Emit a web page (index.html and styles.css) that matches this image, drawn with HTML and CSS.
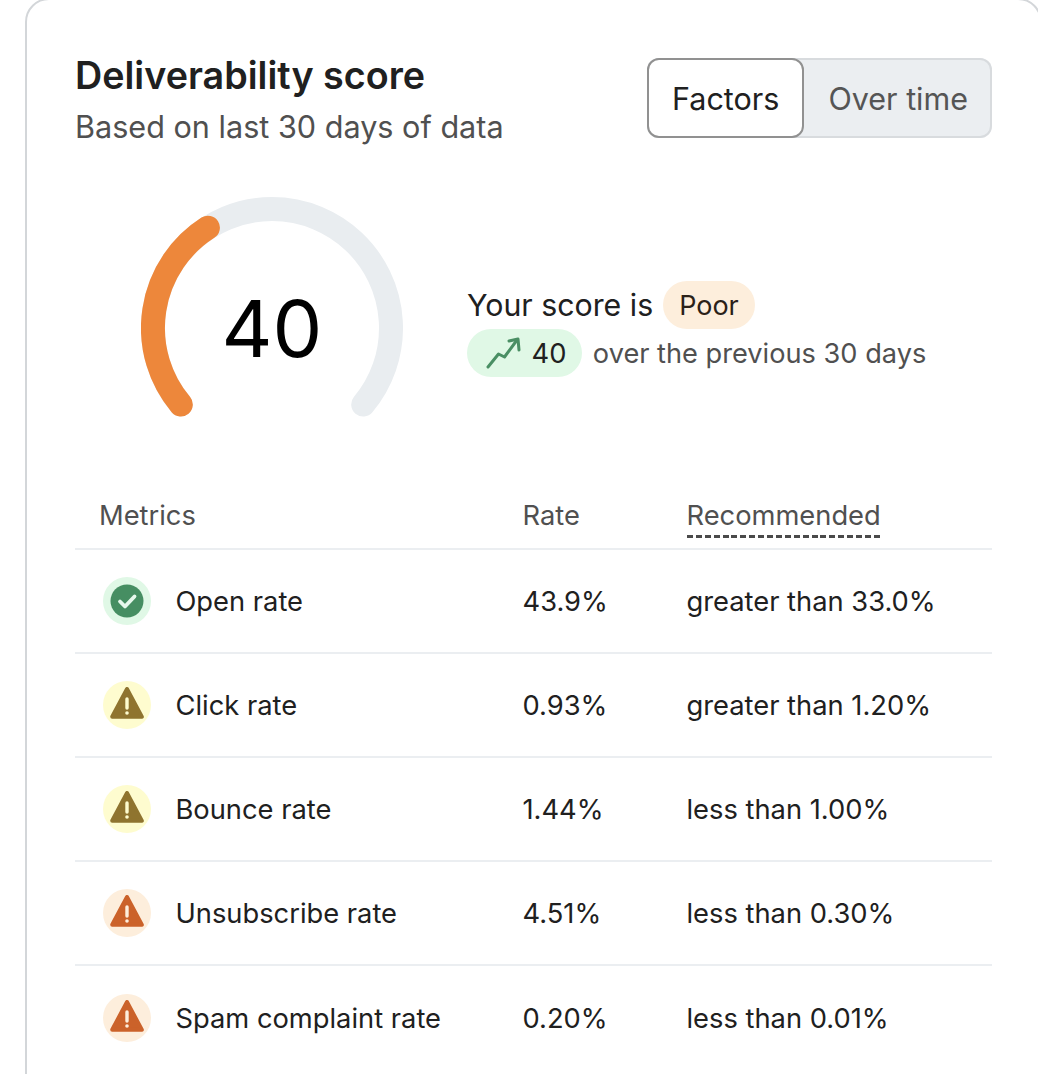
FILE: index.html
```html
<!DOCTYPE html>
<html lang="en">
<head>
<meta charset="utf-8">
<title>Deliverability score</title>
<link rel="stylesheet" href="styles.css">
</head>
<body>
<section class="card">
  <header class="head">
    <div>
      <h1 class="title">Deliverability score</h1>
      <p class="sub">Based on last 30 days of data</p>
    </div>
    <div class="toggle">
      <span class="seg seg-on">Factors</span>
      <span class="seg">Over time</span>
    </div>
  </header>

  <div class="summary">
    <div class="gauge">
      <svg class="gauge-svg" width="262" height="222" viewBox="0 0 262 222" fill="none" stroke-width="24" stroke-linecap="round">
        <path d="M39.8 207.5A119 119 0 1 1 222.2 207.5" stroke="#e9edf0"/>
        <path d="M39.8 207.5A119 119 0 0 1 66.9 30.7" stroke="#ed873b"/>
      </svg>
      <span class="gauge-num">40</span>
    </div>
    <div class="score">
      <div class="score-line"><span>Your score is</span><span class="pill pill-poor">Poor</span></div>
      <div class="delta-line">
        <span class="pill pill-delta">
          <svg width="36" height="36" viewBox="0 0 36 36" fill="none" stroke="#4a8f64" stroke-width="3" stroke-linecap="round" stroke-linejoin="round"><path d="M3 32 13.500 19l6 3L32 5"/><path d="M24 6 33 4l1 11"/></svg>
          40
        </span>
        <span class="delta-text">over the previous 30 days</span>
      </div>
    </div>
  </div>

  <div class="table">
    <div class="row row-head">
      <span class="th-metric">Metrics</span>
      <span>Rate</span>
      <span><span class="dashed">Recommended</span></span>
    </div>
    <div class="row">
      <span class="metric"><span class="badge badge-good"><svg width="34" height="34" viewBox="0 0 34 34"><circle cx="17" cy="17" r="16.500" fill="#468e62"/><path d="M10 17.500 15 22.500 24.500 12.500" fill="none" stroke="#e6f8ec" stroke-width="3.800" stroke-linecap="round" stroke-linejoin="round"/></svg></span>Open rate</span>
      <span>43.9%</span>
      <span>greater than 33.0%</span>
    </div>
    <div class="row">
      <span class="metric"><span class="badge badge-warn"><svg width="36" height="36" viewBox="0 0 36 36"><path d="M18 2 32.800 29.700H3.200Z" fill="#8f742f" stroke="#8f742f" stroke-width="4" stroke-linejoin="round"/><path d="M18 12v9" stroke="#fefccf" stroke-width="3.400" stroke-linecap="round"/><circle cx="18" cy="26" r="1.800" fill="#fefccf"/></svg></span>Click rate</span>
      <span>0.93%</span>
      <span>greater than 1.20%</span>
    </div>
    <div class="row">
      <span class="metric"><span class="badge badge-warn"><svg width="36" height="36" viewBox="0 0 36 36"><path d="M18 2 32.800 29.700H3.200Z" fill="#8f742f" stroke="#8f742f" stroke-width="4" stroke-linejoin="round"/><path d="M18 12v9" stroke="#fefccf" stroke-width="3.400" stroke-linecap="round"/><circle cx="18" cy="26" r="1.800" fill="#fefccf"/></svg></span>Bounce rate</span>
      <span>1.44%</span>
      <span>less than 1.00%</span>
    </div>
    <div class="row">
      <span class="metric"><span class="badge badge-bad"><svg width="36" height="36" viewBox="0 0 36 36"><path d="M18 2 32.800 29.700H3.200Z" fill="#cb622a" stroke="#cb622a" stroke-width="4" stroke-linejoin="round"/><path d="M18 12v9" stroke="#fdeedc" stroke-width="3.400" stroke-linecap="round"/><circle cx="18" cy="26" r="1.800" fill="#fdeedc"/></svg></span>Unsubscribe rate</span>
      <span>4.51%</span>
      <span>less than 0.30%</span>
    </div>
    <div class="row">
      <span class="metric"><span class="badge badge-bad"><svg width="36" height="36" viewBox="0 0 36 36"><path d="M18 2 32.800 29.700H3.200Z" fill="#cb622a" stroke="#cb622a" stroke-width="4" stroke-linejoin="round"/><path d="M18 12v9" stroke="#fdeedc" stroke-width="3.400" stroke-linecap="round"/><circle cx="18" cy="26" r="1.800" fill="#fdeedc"/></svg></span>Spam complaint rate</span>
      <span>0.20%</span>
      <span>less than 0.01%</span>
    </div>
  </div>
</section>
</body>
</html>
```
FILE: styles.css
```css
* { box-sizing: border-box; }
html, body { margin: 0; height: 100%; overflow: hidden; background: #fff; }
body { font-family: Inter, "Noto Sans", sans-serif; color: #202020; }

.card {
  width: 1017px;
  height: 1200px;
  margin: -2px 0 0 25px;
  padding: 51px 48px 0;
  border: 2px solid #d3d6d9;
  border-radius: 24px;
  background: #fff;
}

.head { display: flex; justify-content: space-between; align-items: flex-start; }
.title { margin: 0; font-size: 37.700px; line-height: 48px; font-weight: 600; color: #202020; }
.sub { margin: 6px 0 0; font-size: 30.600px; line-height: 44px; color: #505050; }

.toggle {
  display: flex;
  height: 80px;
  margin-top: 7px;
  border-radius: 12px;
  background: #ebeef1;
  box-shadow: inset 0 0 0 2px #d8dbde;
  font-size: 30.500px;
  color: #555;
}
.seg { display: flex; align-items: center; padding: 0 24px; }
.seg-on { padding: 0 23px; background: #fff; color: #202020; border: 2px solid #919191; border-radius: 12px; }

.summary { display: flex; align-items: flex-start; margin-top: 48px; padding-left: 66px; }
.gauge { position: relative; width: 262px; height: 222px; flex: none; }
.gauge-svg { display: block; }
.gauge-num {
  position: absolute;
  left: 0; right: 0; top: 131px;
  transform: translateY(-50%);
  text-align: center;
  font-size: 79px;
  line-height: 90px;
  color: #000;
}

.score { margin: 84px 0 0 64px; font-size: 30.300px; }
.score-line, .delta-line { display: flex; align-items: center; height: 48px; }
.pill { display: inline-flex; align-items: center; height: 48px; border-radius: 24px; }
.pill-poor { margin-left: 10px; padding: 0 16px; background: #fdeedc; font-size: 27px; color: #2b2118; }
.pill-delta { gap: 10.500px; padding: 0 15.500px 0 18px; background: #e0f8e6; font-size: 27.300px; color: #202020; }
.delta-text { margin-left: 11px; font-size: 27.200px; color: #505050; }

.table { margin-top: 79px; font-size: 27.300px; }
.row {
  display: grid;
  grid-template-columns: 447.500px 164px 1fr;
  align-items: center;
  height: 104px;
  border-bottom: 2px solid #ebeef1;
}
.row:last-child { border-bottom: 0; }
.row-head { height: 52px; align-items: start; line-height: 36px; color: #505050; }
.th-metric { padding-left: 24px; }
.dashed {
  display: inline-block;
  padding-bottom: 4px;
  background: repeating-linear-gradient(90deg, #4a4a4a 0 6px, transparent 6px 8.900px) left bottom / 100% 3px no-repeat;
}

.metric { display: flex; align-items: center; gap: 24.500px; padding-left: 28px; }
.badge { display: flex; align-items: center; justify-content: center; width: 48px; height: 48px; border-radius: 50%; flex: none; }
.badge-good { background: #e0f8e6; }
.badge-warn { background: #fefccf; }
.badge-bad { background: #fdeedc; }
```
